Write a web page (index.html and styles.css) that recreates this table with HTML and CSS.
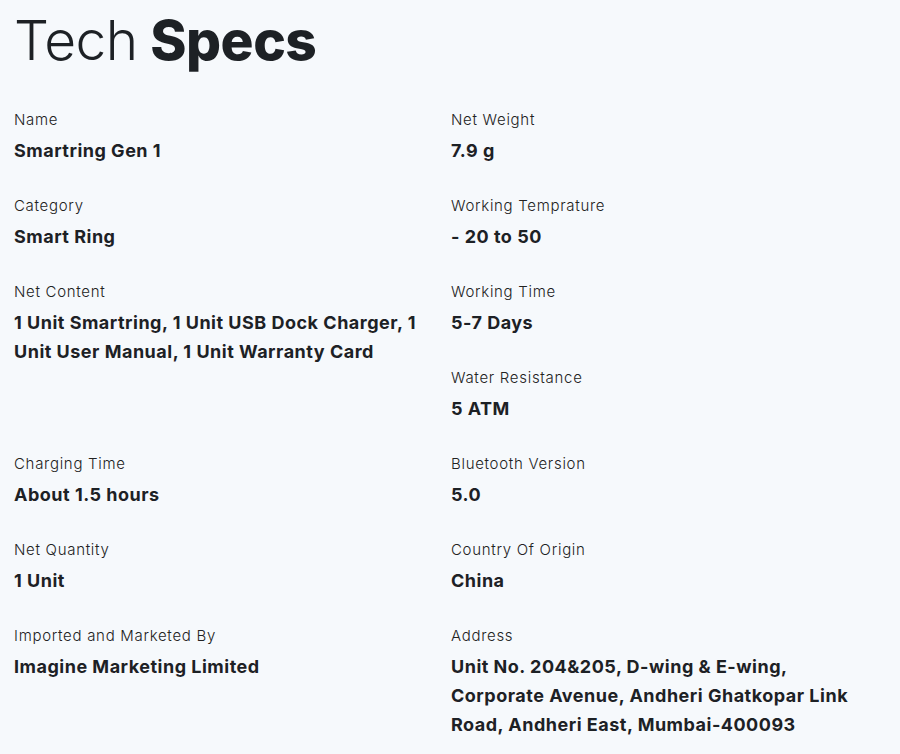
FILE: index.html
```html
<!DOCTYPE html>
<html lang="en">
<head>
<meta charset="utf-8">
<title>Tech Specs</title>
<link rel="stylesheet" href="styles.css">
</head>
<body>
<section class="specs">
  <h1 class="title"><span class="light">Tech</span> <span class="bold">Specs</span></h1>
  <div class="grid">
    <div class="item"><div class="label">Name</div><div class="value">Smartring Gen 1</div></div>
    <div class="item"><div class="label">Net Weight</div><div class="value">7.9 g</div></div>
    <div class="item"><div class="label">Category</div><div class="value">Smart Ring</div></div>
    <div class="item"><div class="label">Working Temprature</div><div class="value">- 20 to 50</div></div>
    <div class="item"><div class="label">Net Content</div><div class="value">1 Unit Smartring, 1 Unit USB Dock Charger, 1 Unit User Manual, 1 Unit Warranty Card</div></div>
    <div class="item"><div class="label">Working Time</div><div class="value">5-7 Days</div></div>
    <div class="item empty"></div>
    <div class="item"><div class="label">Water Resistance</div><div class="value">5 ATM</div></div>
    <div class="item"><div class="label">Charging Time</div><div class="value">About 1.5 hours</div></div>
    <div class="item"><div class="label">Bluetooth Version</div><div class="value">5.0</div></div>
    <div class="item"><div class="label">Net Quantity</div><div class="value">1 Unit</div></div>
    <div class="item"><div class="label">Country Of Origin</div><div class="value">China</div></div>
    <div class="item"><div class="label">Imported and Marketed By</div><div class="value">Imagine Marketing Limited</div></div>
    <div class="item"><div class="label">Address</div><div class="value">Unit No. 204&amp;205, D-wing &amp; E-wing, Corporate Avenue, Andheri Ghatkopar Link Road, Andheri East, Mumbai-400093</div></div>
  </div>
</section>
</body>
</html>
```

FILE: styles.css
```css
html, body {
  margin: 0;
  padding: 0;
  background: #f6f9fc;
}
body {
  font-family: "Inter", "Open Sans", sans-serif;
  color: #1d2125;
}
.specs {
  padding: 0 14px 40px;
}
.title {
  margin: 0;
  padding-top: 5px;
  font-size: 55px;
  line-height: 70px;
  letter-spacing: -0.5px;
}
.title .light {
  font-weight: 300;
}
.title .bold {
  font-weight: 800;
}
.grid {
  margin-top: 35px;
  display: grid;
  grid-template-columns: 437px 1fr;
  grid-auto-rows: minmax(86px, auto);
}
.label {
  font-size: 15px;
  font-weight: 300;
  line-height: 20px;
  letter-spacing: 0.7px;
  color: #222;
}
.value {
  margin-top: 6px;
  font-size: 18px;
  font-weight: 700;
  line-height: 29px;
  letter-spacing: 0.5px;
  padding-right: 14px;
}
```
